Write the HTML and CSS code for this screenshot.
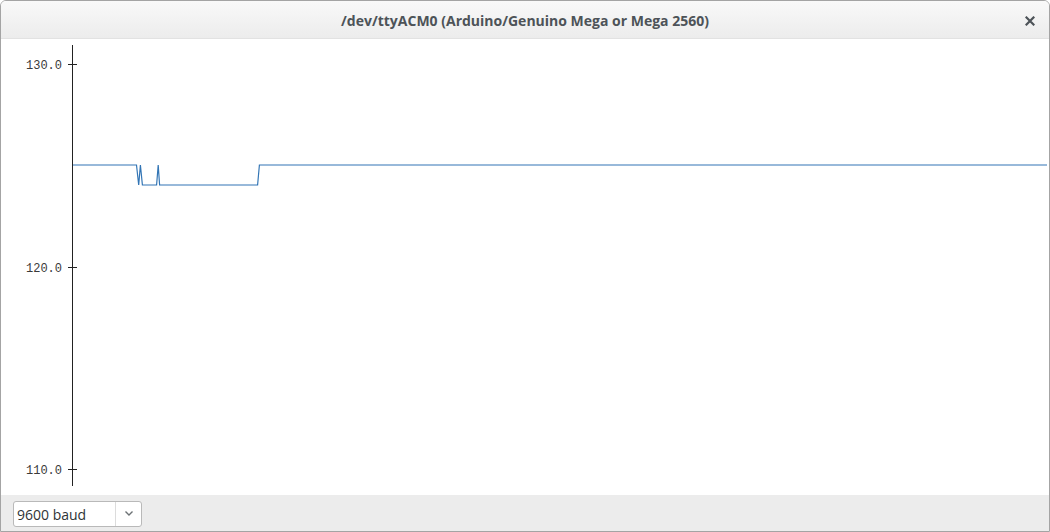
FILE: index.html
```html
<!DOCTYPE html>
<html>
<head>
<meta charset="utf-8">
<link rel="stylesheet" href="styles.css">
</head>
<body>
<div class="window">
  <header class="titlebar">
    <span class="title">/dev/ttyACM0 (Arduino/Genuino Mega or Mega 2560)</span>
    <button class="close" aria-label="Close">
      <svg width="10" height="10" viewBox="0 0 10 10"><path d="M1.5 1.5 L8.5 8.5 M8.5 1.5 L1.5 8.5" stroke="#4d5358" stroke-width="2.2" stroke-linecap="square"/></svg>
    </button>
  </header>
  <main class="plot">
    <svg class="chart" width="1048" height="456" viewBox="0 0 1048 456">
      <g transform="translate(-1,-39)">
        <line x1="72.5" y1="45" x2="72.5" y2="486" stroke="#222" stroke-width="1"/>
        <line x1="68" y1="64.5" x2="77" y2="64.5" stroke="#222"/>
        <line x1="68" y1="267.5" x2="77" y2="267.5" stroke="#222"/>
        <line x1="68" y1="469.5" x2="77" y2="469.5" stroke="#222"/>
        <text class="lbl" x="62" y="69" text-anchor="end">130.0</text>
        <text class="lbl" x="62" y="272" text-anchor="end">120.0</text>
        <text class="lbl" x="62" y="474" text-anchor="end">110.0</text>
        <polyline fill="none" stroke="#3275b5" stroke-width="1.2"
          points="73,165 136.5,165 138.7,185 140.4,165 142.4,185 156.6,185 158.2,165 159.6,185 257.6,185 259.4,165 1047,165"/>
      </g>
    </svg>
  </main>
  <footer class="bottombar">
    <div class="select">
      <span class="select-value">9600 baud</span>
      <span class="select-arrow">
        <svg width="10" height="7" viewBox="0 0 10 7"><path d="M1.5 1.5 L5 5 L8.5 1.5" fill="none" stroke="#6d7275" stroke-width="1.4"/></svg>
      </span>
    </div>
  </footer>
</div>
</body>
</html>
```
FILE: styles.css
```css
* { box-sizing: border-box; }
html, body { margin: 0; padding: 0; background: #fff; }
.window {
  width: 1050px;
  height: 532px;
  border: 1px solid #a4a4a4;
  border-radius: 6px 6px 0 0;
  display: flex;
  flex-direction: column;
  overflow: hidden;
  background: #fff;
}
.titlebar {
  height: 38px;
  flex: none;
  background: linear-gradient(#f9f9f9, #ececec);
  display: flex;
  align-items: center;
  justify-content: center;
  position: relative;
  border-bottom: 1px solid #e2e2e2;
}
.title {
  font-family: "Open Sans", "Noto Sans", sans-serif;
  font-weight: bold;
  font-size: 14px;
  color: #4d5358;
  margin-top: 1px;
}
.close {
  position: absolute;
  right: 11px;
  top: 13px;
  width: 16px;
  height: 14px;
  border: 0;
  padding: 0;
  background: transparent;
  display: flex;
  align-items: center;
  justify-content: center;
}
.plot {
  flex: 1;
  background: #fff;
  overflow: hidden;
}
.chart { display: block; }
.lbl {
  font-family: "Liberation Mono", monospace;
  font-size: 12px;
  fill: #3a3a3a;
}
.bottombar {
  height: 36px;
  flex: none;
  background: #ececec;
  display: flex;
  align-items: center;
  padding-left: 12px;
}
.select {
  width: 129px;
  height: 26px;
  background: #fff;
  border: 1px solid #b9b9b9;
  border-radius: 3px;
  display: flex;
  align-items: center;
  margin-top: 1px;
}
.select-value {
  flex: 1;
  font-family: "Open Sans", "Noto Sans", sans-serif;
  font-size: 14px;
  color: #2e3436;
  padding-left: 3px;
  margin-top: 1px;
}
.select-arrow {
  width: 26px;
  height: 100%;
  border-left: 1px solid #dcdcdc;
  display: flex;
  align-items: center;
  justify-content: center;
}
```
